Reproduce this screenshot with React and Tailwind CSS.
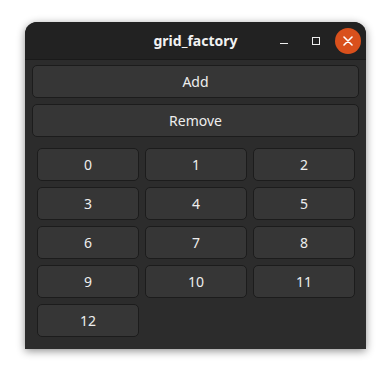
import React from 'react';

const cells = Array.from({ length: 13 }, (_, i) => i);

const Btn = ({ label, className = '' }) => (
  <button
    className={`h-[33px] rounded-[5px] border border-[#1c1c1c] bg-[#363636] text-[14px] text-[#eeeeee] ${className}`}
  >
    {label}
  </button>
);

const App = () => {
  return (
    <div
      className="w-[391px] h-[377px] bg-white pt-[22px] pl-[25px]"
      style={{ fontFamily: '"Noto Sans", "Open Sans", sans-serif' }}
    >
      <div className="w-[341px] h-[327px] bg-[#2c2c2c] rounded-t-[12px] shadow-[0_2px_8px_rgba(0,0,0,0.45)] flex flex-col overflow-hidden">
        {/* titlebar */}
        <div className="relative h-[38px] shrink-0 bg-[#222222] border-b border-[#1a1a1a] flex items-center justify-center">
          <span className="text-[14px] font-bold text-[#f2f2f2]">grid_factory</span>
          <div className="absolute right-[5px] top-0 h-full flex items-center">
            <div className="w-[8px] h-[1.5px] bg-[#eeeeee] mt-[6px] mr-[24px]" />
            <div className="w-[8px] h-[8px] border-[1.5px] border-[#eeeeee] mr-[15px]" />
            <div className="w-[26px] h-[26px] rounded-full bg-[#d9501c] flex items-center justify-center">
              <svg width="10" height="10" viewBox="0 0 10 10">
                <path d="M1 1 L9 9 M9 1 L1 9" stroke="#ffffff" strokeWidth="1.6" strokeLinecap="round" />
              </svg>
            </div>
          </div>
        </div>

        {/* body */}
        <div className="flex flex-col px-[7px] pt-[5px] pb-[12px]">
          <Btn label="Add" className="w-full" />
          <Btn label="Remove" className="w-full mt-[6px]" />
          <div className="grid grid-cols-3 gap-[6px] w-[318px] ml-[5px] mt-[11px]">
            {cells.map((n) => (
              <Btn key={n} label={n} />
            ))}
          </div>
        </div>
      </div>
    </div>
  );
};

export default App;
